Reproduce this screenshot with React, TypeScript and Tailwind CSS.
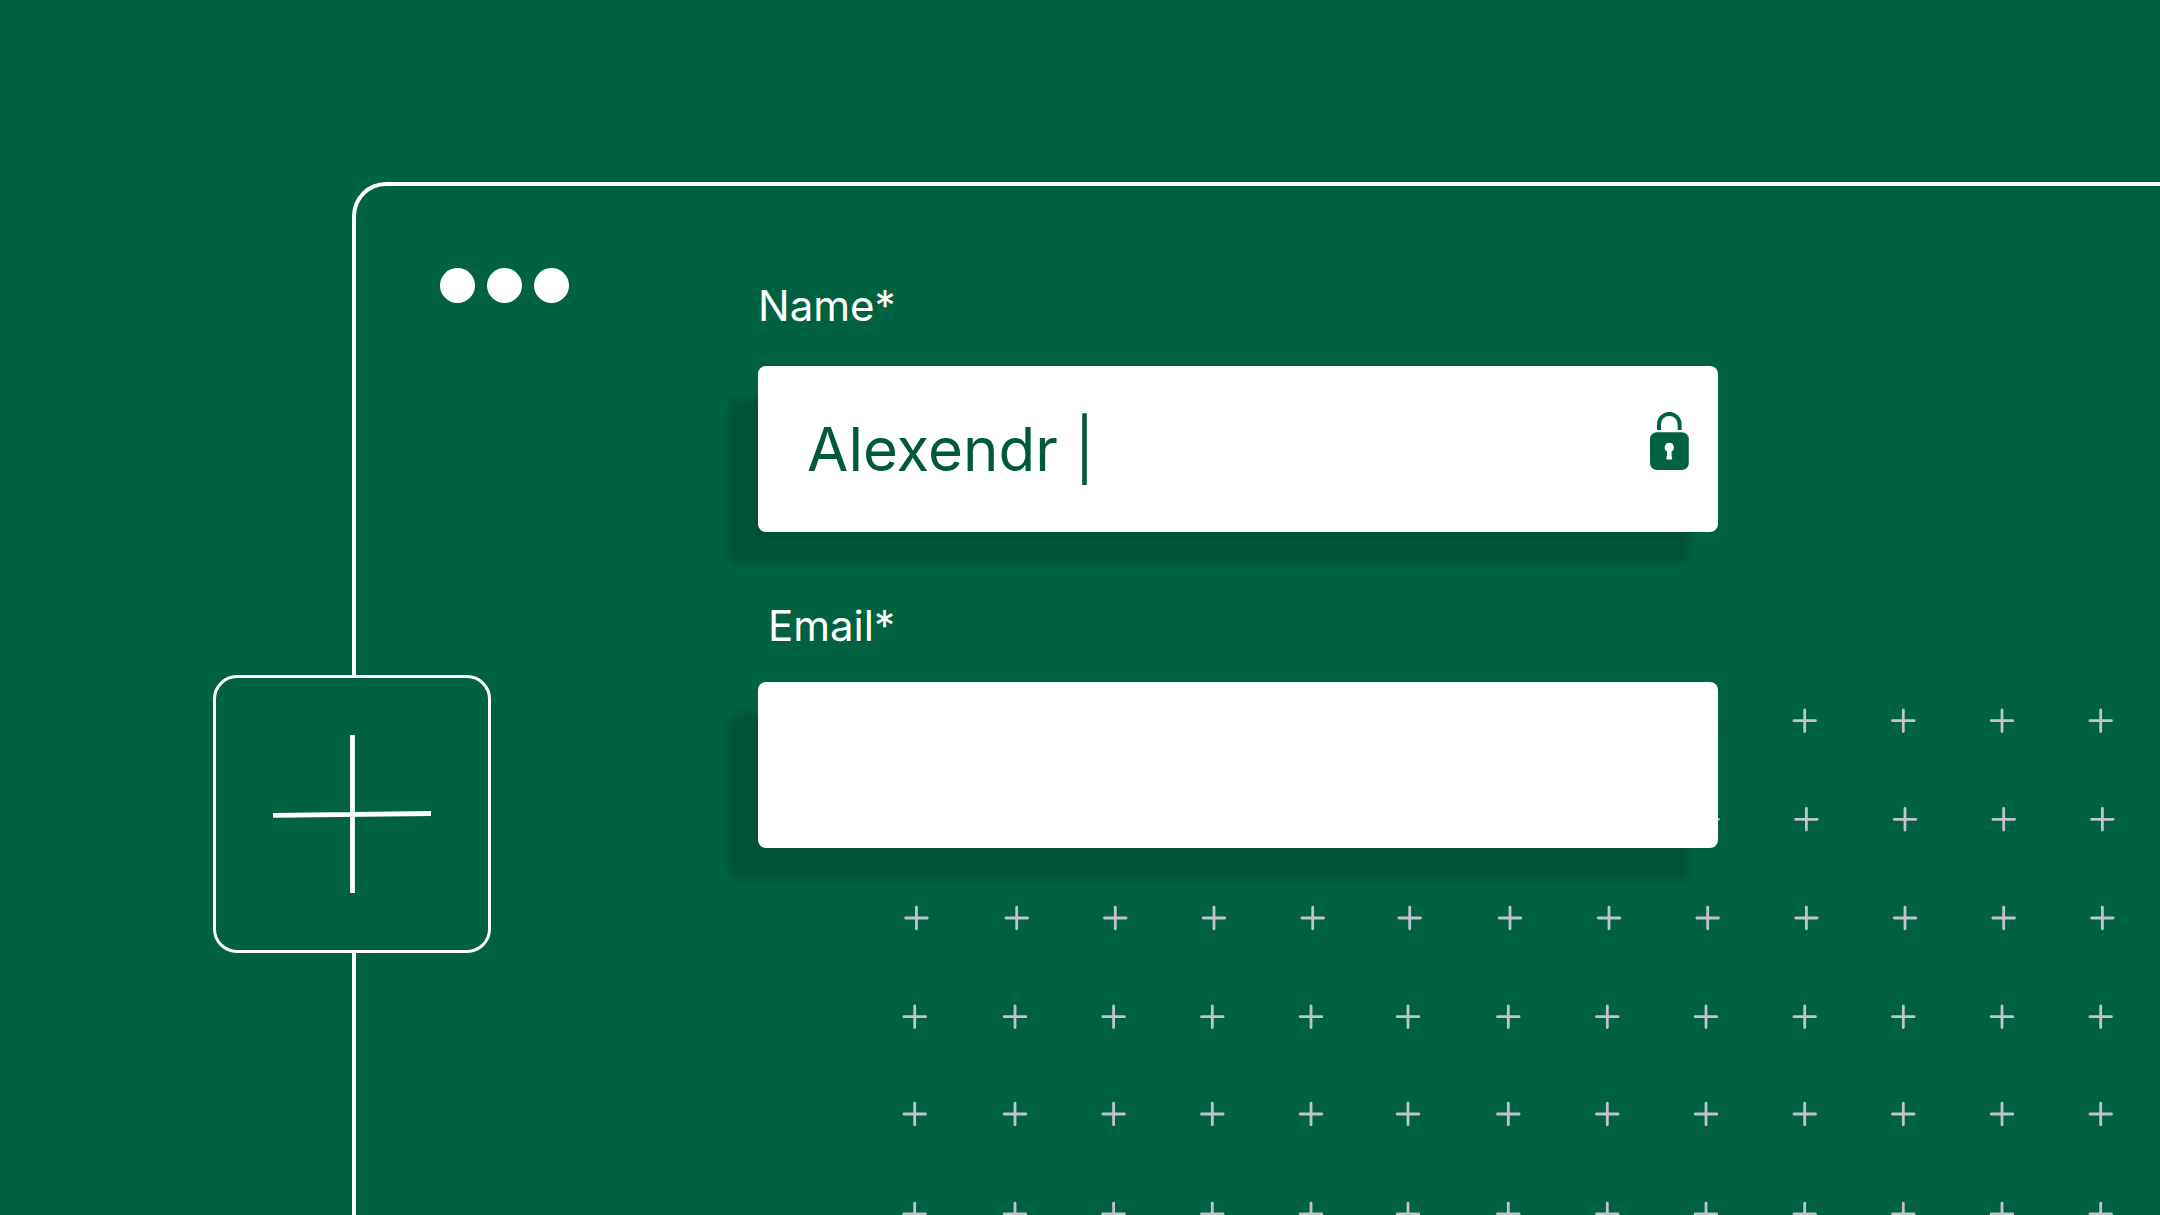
import { useState } from 'react'

// x positions of the crosses, measured from the inside of the window frame
const columns = [558.7, 659, 757.6, 856.3, 955, 1052, 1152.3, 1251.3, 1350, 1448.7, 1547.3, 1646, 1744.7]

// the middle rows sit slightly to the right of the others
const rows = [
  { y: 534.7, shift: 0 },
  { y: 633.3, shift: 1.7 },
  { y: 732, shift: 1.7 },
  { y: 830.7, shift: 0 },
  { y: 928, shift: 0 },
  { y: 1028, shift: 0 },
]

const CrossPattern = () => (
  <svg
    className="absolute inset-0 h-full w-full"
    fill="none"
    stroke="#c1c2cc"
    strokeWidth="2.8"
    strokeLinecap="round"
    aria-hidden="true"
  >
    {rows.map(({ y, shift }) =>
      columns.map((x) => (
        <path key={`${x}-${y}`} d={`M${x + shift - 10.8} ${y}h21.6M${x + shift} ${y - 10.8}v21.6`} />
      ))
    )}
  </svg>
)

const LockIcon = () => (
  <svg
    className="absolute right-7 top-[46px] h-[58px] w-10"
    viewBox="0 0 40 58"
    fill="none"
    aria-hidden="true"
  >
    <path d="M9 18V12.2a10.3 10.3 0 0 1 20.6 0V18" stroke="#006241" strokeWidth="4" />
    <rect y="20.3" width="38.8" height="37.7" rx="7" fill="#006241" />
    <path
      d="M19.3 30.8a4.6 4.6 0 0 0-2.3 8.6q.5 2.8-.6 6.5-.3 1.6 1 1.6h3.8q1.3 0 1-1.6-1.1-3.7-.6-6.5a4.6 4.6 0 0 0-2.3-8.6z"
      fill="white"
    />
  </svg>
)

const WindowDots = () => (
  <div className="flex shrink-0 gap-3">
    <span className="size-[35px] rounded-full bg-white" />
    <span className="size-[35px] rounded-full bg-white" />
    <span className="size-[35px] rounded-full bg-white" />
  </div>
)

const inputStyle =
  'block h-[166px] w-full rounded-lg bg-white pl-[49px] pr-24 text-[60px] text-[#005a3a] shadow-[-28px_32px_8px_rgba(0,0,0,0.16)] outline-none'

const App = () => {
  const [name, setName] = useState('Alexendr |')
  const [email, setEmail] = useState('')

  return (
    <main className="flex min-h-screen overflow-hidden bg-[#006241] pl-[352px] pt-[182px] font-['Inter',sans-serif] text-white">
      <div className="relative flex-1 rounded-tl-[34px] border-l-4 border-t-4 border-white">
        <CrossPattern />
        <button
          type="button"
          aria-label="Add field"
          className="absolute -left-[143px] top-[489px] flex size-[278px] items-center justify-center rounded-3xl border-3 border-white bg-[#006241]"
        >
          <svg className="size-40" viewBox="0 0 160 160" stroke="white" strokeWidth="4.8">
            <path d="M80.5 1v158M1 81.3l158-1.8" />
          </svg>
        </button>
        <div className="relative flex items-start pl-[84px] pt-[82px]">
          <WindowDots />
          <form className="ml-[189px] mt-[14px] w-full max-w-[960px]">
            <label htmlFor="name" className="mb-9 block text-[42px] leading-[48px]">
              Name*
            </label>
            <div className="relative mb-[70px]">
              <input
                id="name"
                type="text"
                value={name}
                onChange={(e) => setName(e.target.value)}
                className={inputStyle}
              />
              <LockIcon />
            </div>
            <label htmlFor="email" className="mb-8 block pl-2.5 text-[42px] leading-[48px]">
              Email*
            </label>
            <input
              id="email"
              type="email"
              value={email}
              onChange={(e) => setEmail(e.target.value)}
              className={inputStyle}
            />
          </form>
        </div>
      </div>
    </main>
  )
}

export default App
